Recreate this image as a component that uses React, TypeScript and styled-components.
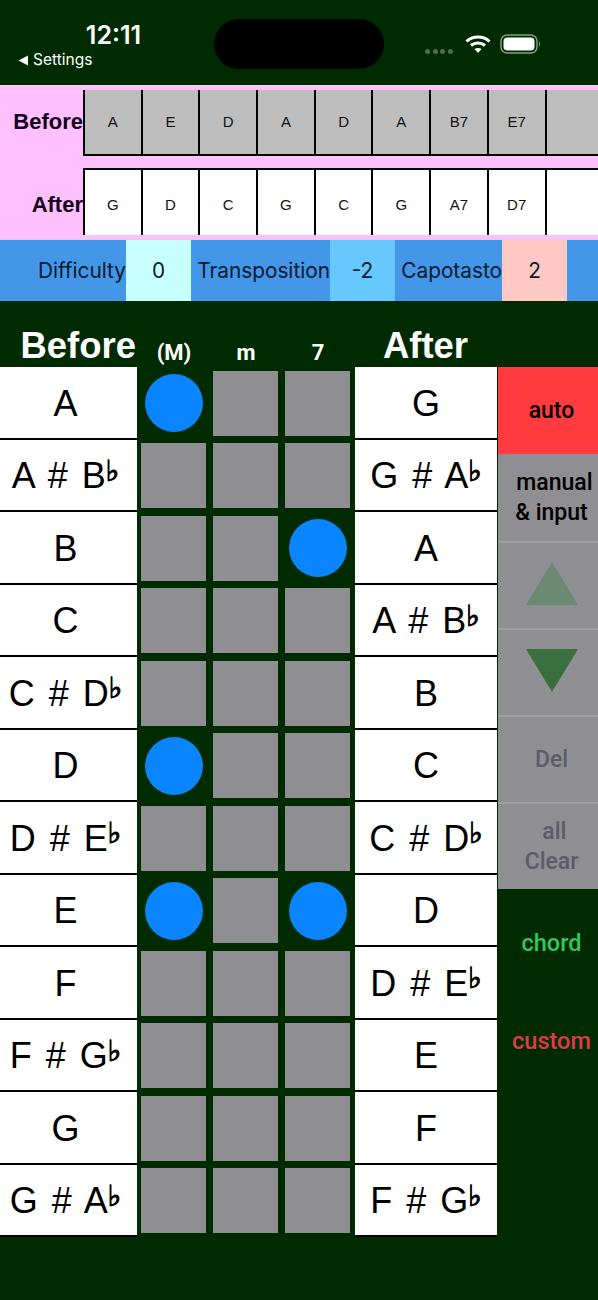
import React from "react";
import styled, { createGlobalStyle } from "styled-components";

const GlobalStyle = createGlobalStyle`
  html, body {
    margin: 0;
    padding: 0;
    background: #002b00;
    font-family: "Liberation Sans", "DejaVu Sans", sans-serif;
  }
`;

const Page = styled.div`
  width: 598px;
  height: 1300px;
  overflow: hidden;
  background: #002b00;
`;

const StatusBar = styled.div`
  height: 85px;
  display: flex;
  color: #fff;
`;

const StatusLeft = styled.div`
  width: 214px;
  padding-top: 20px;
  box-sizing: border-box;
  display: flex;
  flex-direction: column;
`;

const Clock = styled.div`
  font-family: Inter, sans-serif;
  font-size: 25px;
  line-height: 30px;
  font-weight: 600;
  text-align: center;
  padding-left: 13px;
`;

const BackLink = styled.div`
  font-family: Inter, sans-serif;
  font-size: 15.5px;
  line-height: 20px;
  padding-left: 18px;
  display: flex;
  align-items: center;
  gap: 4px;
`;

const Island = styled.div`
  width: 170px;
  height: 50px;
  margin-top: 19px;
  border-radius: 25px;
  background: #000;
`;

const StatusRight = styled.div`
  height: 18px;
  margin: 35px 0 0 41px;
  display: flex;
  align-items: center;
`;

const SignalDots = styled.div`
  display: flex;
  gap: 2.5px;
  margin: 14px 12px 0 0;
`;

const SignalDot = styled.span`
  width: 5px;
  height: 5px;
  border-radius: 50%;
  background: #4f6f4f;
`;

const BatteryIcon = styled.svg`
  margin-left: 9px;
`;

const ChordBand = styled.div`
  height: 155px;
  box-sizing: border-box;
  background: #ffc0ff;
  border-top: 1px solid #e8d8e8;
  border-bottom: 1px solid #e0d0e4;
  padding-top: 4px;
  overflow: hidden;
`;

const ChordRow = styled.div<{ $after?: boolean }>`
  display: flex;
  height: ${(p) => (p.$after ? "67px" : "66px")};
  margin-top: ${(p) => (p.$after ? "12px" : "0")};
`;

const RowLabel = styled.div<{ $after?: boolean }>`
  flex: 0 0 83px;
  font-size: 22px;
  font-weight: 700;
  color: #14001a;
  text-align: right;
  align-self: center;
  margin-top: ${(p) => (p.$after ? "7px" : "-2px")};
`;

const ChordCell = styled.div<{ $after?: boolean }>`
  flex: 0 0 57.7px;
  box-sizing: border-box;
  display: flex;
  align-items: center;
  justify-content: center;
  font-size: 15px;
  color: #111;
  background: ${(p) => (p.$after ? "#fff" : "#bdbdbd")};
  border-left: 2px solid #000;
  border-top: ${(p) => (p.$after ? "2px solid #000" : "none")};
  border-bottom: ${(p) => (p.$after ? "none" : "2px solid #000")};
  padding-top: ${(p) => (p.$after ? "3px" : "0")};
  padding-bottom: ${(p) => (p.$after ? "0" : "2px")};
`;

const InfoBar = styled.div`
  height: 61px;
  display: grid;
  grid-template-columns: 126px 65px 139px 65px 107px 65px 1fr;
  background: #4496e8;
  font-family: Inter, sans-serif;
  font-size: 20.8px;
  color: #0a1a2c;
`;

const InfoLabel = styled.div`
  display: flex;
  align-items: center;
  justify-content: flex-end;
  white-space: nowrap;
`;

const InfoValue = styled.div<{ $bg: string }>`
  display: flex;
  align-items: center;
  justify-content: center;
  background: ${(p) => p.$bg};
`;

const Board = styled.div`
  display: flex;
  margin-top: 19px;
`;

const Table = styled.div`
  width: 498px;
  display: grid;
  grid-template-columns: 137px repeat(3, 72px) 145px;
  grid-template-rows: 47px repeat(12, 72.5px);
`;

const BigHeading = styled.div<{ $align: string }>`
  font-size: 36.5px;
  line-height: 51px;
  font-weight: 700;
  color: #fff;
  text-align: ${(p) => p.$align};
  padding-right: ${(p) => (p.$align === "right" ? "1px" : "0")};
  white-space: nowrap;
`;

const ColumnHeading = styled.div`
  font-family: Roboto, sans-serif;
  font-size: 22px;
  font-weight: 700;
  color: #fff;
  text-align: center;
  line-height: 30px;
  padding: 18px 0 0 2px;
`;

const NoteCell = styled.div<{ $right?: boolean }>`
  box-sizing: border-box;
  display: flex;
  align-items: center;
  justify-content: center;
  background: #fff;
  color: #000;
  font-size: 36px;
  word-spacing: 4px;
  white-space: pre;
  margin-left: ${(p) => (p.$right ? "2px" : "0")};
  margin-right: ${(p) => (p.$right ? "1px" : "0")};
  padding-right: ${(p) => (p.$right ? "0" : "6px")};
  padding-top: 3px;
  border-bottom: 2px solid #000;
`;

const Flat = styled.span`
  font-family: "DejaVu Sans", sans-serif;
  font-size: 29px;
  line-height: 1;
  -webkit-text-stroke: 1px #000;
  color: #000;
  position: relative;
  top: -5px;
`;

const PadCell = styled.div`
  display: flex;
  align-items: center;
  justify-content: center;
`;

const Pad = styled.div`
  width: 65px;
  height: 65px;
  background: #8e8e93;
`;

const Dot = styled.div`
  width: 58px;
  height: 58px;
  margin-left: 2px;
  border-radius: 50%;
  background: #0a84ff;
`;

const SidePanel = styled.div`
  flex: 1;
  margin-top: 47px;
  display: flex;
  flex-direction: column;
`;

const SideButton = styled.div<{ $bg?: string; $fg?: string; $lined?: boolean }>`
  height: 87px;
  box-sizing: border-box;
  padding-left: 7px;
  display: flex;
  flex-direction: column;
  align-items: center;
  justify-content: center;
  background: ${(p) => p.$bg ?? "#8e8e93"};
  color: ${(p) => p.$fg ?? "#000"};
  border-top: ${(p) => (p.$lined ? "2px solid #a0a0a4" : "none")};
  font-family: Roboto, sans-serif;
  font-size: 23px;
  line-height: 30px;
  font-weight: 500;
  white-space: pre;
  text-align: center;
`;

const Arrow = styled.svg`
  margin-top: -4px;
`;

const ModeLabel = styled.div<{ $fg: string }>`
  height: 98px;
  display: flex;
  align-items: center;
  justify-content: center;
  padding-left: 7px;
  color: ${(p) => p.$fg};
  font-family: Roboto, sans-serif;
  font-size: 23.5px;
  font-weight: 500;
`;

const ModeList = styled.div`
  margin-top: 5px;
`;

const beforeChords = ["A", "E", "D", "A", "D", "A", "B7", "E7", ""];
const afterChords = ["G", "D", "C", "G", "C", "G", "A7", "D7", ""];

// [note, flat name] for each row, flat is drawn small beside the letter
const notes: Record<string, [string, string?]> = {
  A: ["A"],
  As: ["A # B", "♭"],
  B: ["B"],
  C: ["C"],
  Cs: ["C # D", "♭"],
  D: ["D"],
  Ds: ["D # E", "♭"],
  E: ["E"],
  F: ["F"],
  Fs: ["F # G", "♭"],
  G: ["G"],
  Gs: ["G # A", "♭"],
};

const beforeNotes = ["A", "As", "B", "C", "Cs", "D", "Ds", "E", "F", "Fs", "G", "Gs"];
const afterNotes = ["G", "Gs", "A", "As", "B", "C", "Cs", "D", "Ds", "E", "F", "Fs"];

// which quality is on for each row: M, m, 7
const picked: boolean[][] = [
  [true, false, false],
  [false, false, false],
  [false, false, true],
  [false, false, false],
  [false, false, false],
  [true, false, false],
  [false, false, false],
  [true, false, true],
  [false, false, false],
  [false, false, false],
  [false, false, false],
  [false, false, false],
];

function Note({ name, right }: { name: string; right?: boolean }) {
  const [text, flat] = notes[name];
  return (
    <NoteCell $right={right}>
      {text}
      {flat && <Flat>{flat}</Flat>}
    </NoteCell>
  );
}

export default function App() {
  return (
    <Page>
      <GlobalStyle />
      <StatusBar>
        <StatusLeft>
          <Clock>12:11</Clock>
          <BackLink>
            <svg width="11" height="11" viewBox="0 0 11 11">
              <path d="M10 0.5V10.5L0.5 5.5Z" fill="#fff" />
            </svg>
            Settings
          </BackLink>
        </StatusLeft>
        <Island />
        <StatusRight>
          <SignalDots>
            <SignalDot />
            <SignalDot />
            <SignalDot />
            <SignalDot />
          </SignalDots>
          <svg width="26" height="20" viewBox="0 0 26 20">
            <path d="M1.5 7.5C7.5 1.5 18.5 1.5 24.5 7.5" fill="none" stroke="#fff" strokeWidth="3" />
            <path d="M6 11.5C10 8 16 8 20 11.5" fill="none" stroke="#fff" strokeWidth="3" />
            <path d="M9.5 15C11.5 13.5 14.5 13.5 16.5 15L13 19Z" fill="#fff" />
          </svg>
          <BatteryIcon width="42" height="22" viewBox="0 0 42 22">
            <rect x="1" y="2" width="36" height="18" rx="6" fill="none" stroke="#7fa07f" strokeWidth="1.5" />
            <rect x="3.5" y="4.5" width="31" height="13" rx="4" fill="#fff" />
            <path d="M39 8.5C40.5 9 40.5 13 39 13.5Z" fill="#7fa07f" />
          </BatteryIcon>
        </StatusRight>
      </StatusBar>

      <ChordBand>
        <ChordRow>
          <RowLabel>Before</RowLabel>
          {beforeChords.map((c, i) => (
            <ChordCell key={i}>{c}</ChordCell>
          ))}
        </ChordRow>
        <ChordRow $after>
          <RowLabel $after>After</RowLabel>
          {afterChords.map((c, i) => (
            <ChordCell key={i} $after>
              {c}
            </ChordCell>
          ))}
        </ChordRow>
      </ChordBand>

      <InfoBar>
        <InfoLabel>Difficulty</InfoLabel>
        <InfoValue $bg="#c8ffff">0</InfoValue>
        <InfoLabel>Transposition</InfoLabel>
        <InfoValue $bg="#66c8ff">-2</InfoValue>
        <InfoLabel>Capotasto</InfoLabel>
        <InfoValue $bg="#ffc8c4">2</InfoValue>
        <div />
      </InfoBar>

      <Board>
        <Table>
          <BigHeading $align="right">Before</BigHeading>
          <ColumnHeading>(M)</ColumnHeading>
          <ColumnHeading>m</ColumnHeading>
          <ColumnHeading>7</ColumnHeading>
          <BigHeading $align="center">After</BigHeading>
          {beforeNotes.map((name, row) => (
            <React.Fragment key={name}>
              <Note name={name} />
              {picked[row].map((on, col) => (
                <PadCell key={col}>{on ? <Dot /> : <Pad />}</PadCell>
              ))}
              <Note name={afterNotes[row]} right />
            </React.Fragment>
          ))}
        </Table>
        <SidePanel>
          <SideButton $bg="#ff3b40">auto</SideButton>
          <SideButton>{"\u00a0manual\n& input"}</SideButton>
          <SideButton $lined>
            <Arrow width="52" height="43" viewBox="0 0 52 43">
              <path d="M26 0L52 43H0Z" fill="#6b8a72" />
            </Arrow>
          </SideButton>
          <SideButton $lined>
            <Arrow width="52" height="43" viewBox="0 0 52 43">
              <path d="M0 0H52L26 43Z" fill="#3a7040" />
            </Arrow>
          </SideButton>
          <SideButton $lined $fg="#5c5c66">
            Del
          </SideButton>
          <SideButton $lined $fg="#5c5c66">
            {"\u00a0all\nClear"}
          </SideButton>
          <ModeList>
            <ModeLabel $fg="#34c759">chord</ModeLabel>
            <ModeLabel $fg="#e03a48">custom</ModeLabel>
          </ModeList>
        </SidePanel>
      </Board>
    </Page>
  );
}
